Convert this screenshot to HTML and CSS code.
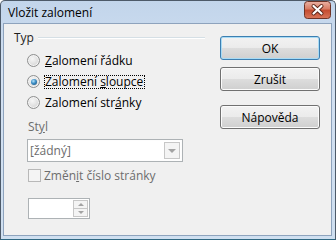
FILE: index.html
```html
<!DOCTYPE html>
<html lang="cs">
<head>
  <meta charset="UTF-8">
  <title>Vložit zalomení</title>
  <link rel="stylesheet" href="styles.css">
</head>
<body>
  <div class="window">
    <div class="titlebar">
      <span class="title">Vložit zalomení</span>
      <div class="close">
        <svg width="27" height="18" viewBox="0 0 27 18">
          <defs>
            <linearGradient id="closeBg" x1="0" y1="0" x2="0" y2="1">
              <stop offset="0" stop-color="#eab2a4"/>
              <stop offset="0.45" stop-color="#d77a62"/>
              <stop offset="0.5" stop-color="#c44b2f"/>
              <stop offset="1" stop-color="#d8765a"/>
            </linearGradient>
          </defs>
          <rect x="0.5" y="0.5" width="26" height="17" rx="3" fill="url(#closeBg)" stroke="#6e3427"/>
          <path d="M9.5 5 L17.5 12.5 M17.5 5 L9.5 12.5" stroke="#5a2418" stroke-width="4" stroke-linecap="round"/>
          <path d="M9.5 5 L17.5 12.5 M17.5 5 L9.5 12.5" stroke="#ffffff" stroke-width="2.2" stroke-linecap="round"/>
        </svg>
      </div>
    </div>
    <div class="client">
      <div class="left">
        <div class="group-head">
          <span>Typ</span>
          <div class="group-line"></div>
        </div>
        <div class="radios">
          <div class="radio-row">
            <span class="radio"></span>
            <span class="label"><u>Z</u>alomení řádku</span>
          </div>
          <div class="radio-row">
            <span class="radio checked"></span>
            <span class="label focused">Zalomení <u>s</u>loupce</span>
          </div>
          <div class="radio-row">
            <span class="radio"></span>
            <span class="label">Zalomení str<u>á</u>nky</span>
          </div>
        </div>
        <div class="style-label disabled">St<u>y</u>l</div>
        <div class="combo">
          <span class="combo-text">[žádný]</span>
          <span class="combo-btn"><span class="arrow-down"></span></span>
        </div>
        <div class="check-row disabled">
          <span class="checkbox"></span>
          <span>Změn<u>i</u>t číslo stránky</span>
        </div>
        <div class="spinner">
          <span class="spin-field"></span>
          <span class="spin-btns">
            <span class="spin-btn"><span class="arrow-up small"></span></span>
            <span class="spin-btn"><span class="arrow-down small"></span></span>
          </span>
        </div>
      </div>
      <div class="buttons">
        <button class="btn default">OK</button>
        <button class="btn">Zrušit</button>
        <button class="btn help">Nápověda</button>
      </div>
    </div>
  </div>
</body>
</html>
```

FILE: styles.css
```css
body {
  margin: 0;
  font-family: "Open Sans", "Noto Sans", sans-serif;
  font-size: 12px;
  color: #000;
  background: #fff;
}
.window {
  width: 336px;
  height: 240px;
  box-sizing: border-box;
  border: 1px solid #4d5a69;
  border-bottom-color: #2f6882;
  border-radius: 5px 5px 0 0;
  padding: 0 3px 3px 2px;
  background: linear-gradient(#c2d5eb, #d2e0f1 30%, #cfdff0);
  display: flex;
  flex-direction: column;
}
.titlebar {
  height: 22px;
  display: flex;
  align-items: flex-start;
  justify-content: space-between;
}
.title {
  margin: 4px 0 0 5px;
  line-height: 16px;
}
.close {
  margin: 0 1px 0 0;
  height: 18px;
}
.close svg {
  display: block;
}
.client {
  flex: 1;
  background: #f0f0f0;
  border: 1px solid #8ea3bd;
  display: flex;
  padding: 7px 11px 0 10px;
  gap: 15px;
}
.left {
  width: 191px;
  display: flex;
  flex-direction: column;
}
.group-head {
  height: 14px;
  line-height: 14px;
  display: flex;
  align-items: center;
  color: #1e1e1e;
}
.group-line {
  flex: 1;
  height: 1px;
  margin: 0 0 0 4px;
  background: #d5dfe5;
  border-bottom: 1px solid #fff;
}
.radios {
  margin: 5px 0 0 13px;
}
.radio-row {
  height: 21px;
  display: flex;
  align-items: center;
}
.radio {
  width: 13px;
  height: 13px;
  box-sizing: border-box;
  border-radius: 50%;
  border: 1px solid #8e8f8f;
  background: radial-gradient(circle at 40% 35%, #f7f7f7, #d4d4d4 80%);
  box-shadow: inset 0 0 0 1px #f4f4f4;
  display: flex;
  align-items: center;
  justify-content: center;
}
.radio.checked::after {
  content: "";
  width: 6px;
  height: 6px;
  border-radius: 50%;
  background: radial-gradient(circle at 40% 35%, #b6e4fb, #3a8cc4 45%, #18496f);
}
.label {
  margin-left: 4px;
  line-height: 12px;
  padding: 0 1px 0 0;
  border: 1px dotted transparent;
}
.label.focused {
  border-color: #000;
}
.disabled {
  color: #6d6d6d;
}
.style-label {
  margin: 7px 0 0 14px;
  line-height: 14px;
}
.combo {
  margin: 5px 0 0 13px;
  width: 156px;
  height: 23px;
  box-sizing: border-box;
  border: 1px solid #adb2b5;
  background: #fff;
  box-shadow: inset 0 0 0 1px #fdfdfd;
  display: flex;
  align-items: center;
}
.combo-text {
  flex: 1;
  padding-left: 2px;
  color: #6d6d6d;
}
.combo-btn {
  width: 16px;
  height: 17px;
  margin-right: 2px;
  box-sizing: border-box;
  border: 1px solid #c7c7c7;
  background: #f4f4f4;
  display: flex;
  align-items: center;
  justify-content: center;
}
.arrow-down {
  width: 0;
  height: 0;
  border-left: 4px solid transparent;
  border-right: 4px solid transparent;
  border-top: 4px solid #a3a3a3;
}
.arrow-up {
  width: 0;
  height: 0;
  border-left: 4px solid transparent;
  border-right: 4px solid transparent;
  border-bottom: 4px solid #a3a3a3;
}
.arrow-down.small {
  border-width: 3px 3px 0;
}
.arrow-up.small {
  border-width: 0 3px 3px;
}
.check-row {
  margin: 6px 0 0 14px;
  height: 14px;
  display: flex;
  align-items: center;
  gap: 3px;
}
.checkbox {
  width: 13px;
  height: 13px;
  box-sizing: border-box;
  border: 1px solid #b8b8b8;
  background: #f4f4f4;
}
.spinner {
  margin: 16px 0 0 14px;
  width: 62px;
  height: 21px;
  box-sizing: border-box;
  border: 1px solid #adb2b5;
  background: #fff;
  display: flex;
  padding: 1px;
}
.spin-field {
  flex: 1;
}
.spin-btns {
  width: 15px;
  display: flex;
  flex-direction: column;
}
.spin-btn {
  flex: 1;
  border: 1px solid #c7c7c7;
  background: #f4f4f4;
  display: flex;
  align-items: center;
  justify-content: center;
}
.spin-btn + .spin-btn {
  border-top: none;
}
.buttons {
  width: 100px;
  margin-top: 5px;
  display: flex;
  flex-direction: column;
}
.btn {
  height: 24px;
  margin: 0 0 7px;
  padding: 0;
  font: inherit;
  color: #000;
  border: 1px solid #707070;
  border-radius: 3px;
  background: linear-gradient(#f2f2f2, #ebebeb 50%, #dddddd 50%, #cfcfcf);
  box-shadow: inset 0 0 0 1px #fbfbfb;
}
.btn.default {
  border-color: #3c7fb1;
  box-shadow: inset 0 0 0 1px #a8dbf5;
}
.btn.help {
  margin-top: 7px;
}
```
